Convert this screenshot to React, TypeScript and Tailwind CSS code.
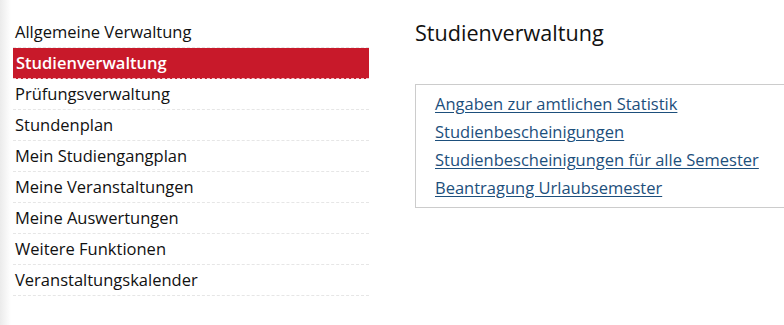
import React from 'react';

const navItems = [
    'Allgemeine Verwaltung',
    'Studienverwaltung',
    'Prüfungsverwaltung',
    'Stundenplan',
    'Mein Studiengangplan',
    'Meine Veranstaltungen',
    'Meine Auswertungen',
    'Weitere Funktionen',
    'Veranstaltungskalender',
];

const links = [
    'Angaben zur amtlichen Statistik',
    'Studienbescheinigungen',
    'Studienbescheinigungen für alle Semester',
    'Beantragung Urlaubsemester',
];

const active = 'Studienverwaltung';

export default function App() {
    return (
        <div
            className="flex h-[325px] w-[784px] overflow-hidden bg-white bg-[linear-gradient(to_right,#ebebeb_0px,#ffffff_11px)]"
            style={{ fontFamily: '"Open Sans", "Liberation Sans", sans-serif' }}
        >
            {/* Sidebar */}
            <nav className="w-[356px] shrink-0 ml-[13px] pt-[17px]">
                <ul>
                    {navItems.map((item) => (
                        <li
                            key={item}
                            className={`h-[31px] border-b border-dashed px-[2px] text-[16.5px] leading-[29px] ${
                                item === active
                                    ? 'bg-[#c8192a] border-[#f3c7cb] font-semibold text-white pl-[3px]'
                                    : 'border-[#e6e6e6] text-[#111]'
                            }`}
                        >
                            {item}
                        </li>
                    ))}
                </ul>
            </nav>

            {/* Content */}
            <main className="flex-1 ml-[46px] pt-[19px]">
                <h1 className="text-[21.6px] leading-[28px] text-[#111]">Studienverwaltung</h1>
                <div className="mt-[37px] border border-r-0 border-[#cccccc] pl-[19px] pt-[5px] pb-[5px]">
                    <ul>
                        {links.map((l) => (
                            <li key={l} className="text-[16.5px] leading-[28px]">
                                <a href="#" className="text-[#1d4f7c] underline underline-offset-2">
                                    {l}
                                </a>
                            </li>
                        ))}
                    </ul>
                </div>
            </main>
        </div>
    );
}
